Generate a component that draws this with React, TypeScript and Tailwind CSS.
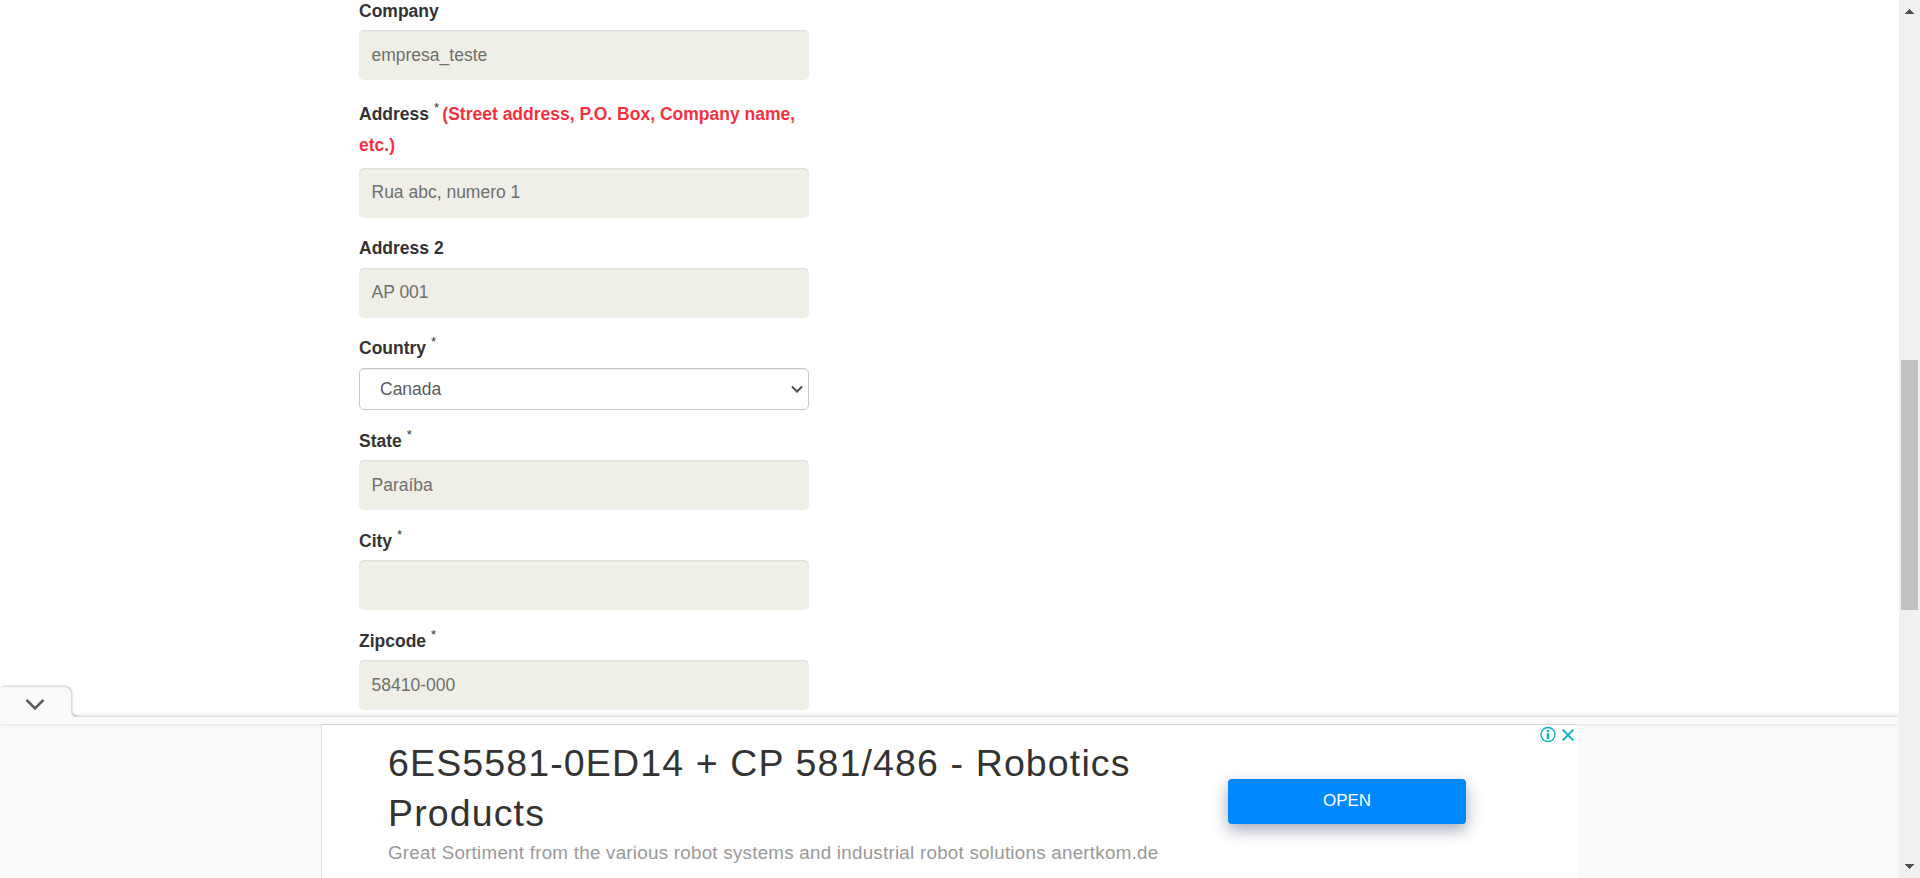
import React from "react";

function Label({ text, required, note, className = "" }: { text: string; required?: boolean; note?: string; className?: string }) {
  return (
    <div className={`flex items-end text-[17.5px] leading-[31px] font-bold text-[#333] ${className}`}>
      <label className="block w-full">
        {text}
        {required && (
          <>
            {" "}
            <sup className="-top-[8px] text-[13px] leading-none font-normal">*</sup>
          </>
        )}
        {note && <span className="-ml-[1.5px] text-[#f4323f]"> {note}</span>}
      </label>
    </div>
  );
}

function Field({ value, className = "" }: { value: string; className?: string }) {
  return (
    <input
      readOnly
      value={value}
      className={`block h-[50px] w-full rounded-[5px] bg-[#efeee7] px-[12.5px] text-[17.5px] text-[#70706c] shadow-[inset_0_1.25px_1.25px_rgba(0,0,0,0.075)] outline-none ${className}`}
    />
  );
}

function Scrollbar() {
  return (
    <div className="flex h-full w-[21px] shrink-0 flex-col items-center bg-[#f0f0f0] pt-[9px]">
      <svg width="9" height="5" viewBox="0 0 9 5" fill="#505050" shapeRendering="crispEdges">
        <path d="M4 0h1v1h1v1h1v1h1v1h1v1H0V4h1V3h1V2h1V1h1z" />
      </svg>
      <div className="mt-[346px] h-[250px] w-[17px] bg-[#c1c1c1]" />
      <svg className="mt-[254px]" width="9" height="5" viewBox="0 0 9 5" fill="#505050" shapeRendering="crispEdges">
        <path d="M0 0h9v1H8v1H7v1H6v1H5v1H4V4H3V3H2V2H1V1H0z" />
      </svg>
    </div>
  );
}

function AdBanner() {
  return (
    <footer className="relative h-[161px] bg-[#fafafa] shadow-[0_0_5px_rgba(0,0,0,0.15)]">
      <svg className="absolute -top-[35px] left-0" width="90" height="36" viewBox="0 0 90 36">
        <path d="M0 7Q2 5 6 5H63Q71 5 71 13V29Q71 35 77 35V36H0Z" fill="#fafafa" style={{ filter: "drop-shadow(1px -1px 1px rgba(0,0,0,0.22))" }} />
        <path d="M26.5 17.9 35 26.3 43.5 17.9" fill="none" stroke="#5c5c5c" strokeWidth="2.6" />
        <path d="M0 35H90V36H0Z" fill="#fafafa" />
      </svg>
      <div className="h-[7px] shadow-[0_0_4px_rgba(0,0,0,0.15)]" />
      <div className="ml-[321px] flex h-[154px] w-[1256px] border-t border-l border-t-[#d2d2d2] border-l-[#dedede] bg-white">
        <div className="w-[906px] shrink-0 pt-[13px] pl-[66px]">
          <h2 className="w-[800px] text-[37.5px] leading-[50px] tracking-[1.13px] text-[#333]">
            6ES5581-0ED14 + CP 581/486 - Robotics Products
          </h2>
          <p className="mt-[2px] text-[18.75px] leading-[26px] tracking-[0.26px] whitespace-nowrap text-[#999]">
            Great Sortiment from the various robot systems and industrial robot solutions anertkom.de
          </p>
        </div>
        <button className="mt-[54px] h-[45px] w-[238px] shrink-0 rounded-[4px] bg-[#0088ff] pb-[2px] text-[17px] text-white shadow-[0_6px_16px_rgba(40,50,80,0.42)]">
          OPEN
        </button>
        <div className="mt-[1px] ml-auto flex h-[17px] items-center gap-[6px] pr-[3.5px]">
          <svg width="16" height="17" viewBox="0 0 16 17" fill="none" stroke="#00aecd">
            <circle cx="8" cy="8.5" r="7" strokeWidth="1.3" />
            <path d="M8 4v2M8 7.2v5.8" strokeWidth="2.4" />
          </svg>
          <svg width="12" height="12" viewBox="0 0 12 12" fill="none" stroke="#00aecd" strokeWidth="1.8">
            <path d="M.6.6 11.4 11.4M11.4.6.6 11.4" />
          </svg>
        </div>
      </div>
    </footer>
  );
}

export default function App() {
  return (
    <div className="flex h-[878px] w-full overflow-hidden bg-white font-['Liberation_Sans',Arial,sans-serif]">
      <div className="flex min-w-0 flex-1 flex-col overflow-hidden">
        <main className="h-[717px] shrink-0 pl-[359px]">
          <form className="w-[450px]">
            <Label text="Company" className="h-[30px] pb-[3px]" />
            <Field value="empresa_teste" />
            <Label text="Address" required note="(Street address, P.O. Box, Company name, etc.)" className="h-[88px] pb-[7px]" />
            <Field value="Rua abc, numero 1" className="pb-px" />
            <Label text="Address 2" className="h-[50px] pb-[4px]" />
            <Field value="AP 001" className="pb-px" />
            <Label text="Country" required className="h-[50px] pb-[4px]" />
            <div className="flex h-[42px] items-center justify-between rounded-[5px] border border-[#c8c8c8] pr-[5px] pl-[20px] text-[17.5px] text-[#5c5c5c] shadow-[inset_0_1px_1px_rgba(0,0,0,0.075)]">
              <span>Canada</span>
              <svg width="12" height="8" viewBox="0 0 12 8" fill="none" stroke="#505050" strokeWidth="2.1">
                <path d="M1 1.6 6 6.6 11 1.6" />
              </svg>
            </div>
            <Label text="State" required className="h-[50px] pb-[3px]" />
            <Field value="Paraíba" />
            <Label text="City" required className="h-[50px] pb-[3px]" />
            <Field value="" />
            <Label text="Zipcode" required className="h-[50px] pb-[3px]" />
            <Field value="58410-000" />
          </form>
        </main>
        <AdBanner />
      </div>
      <Scrollbar />
    </div>
  );
}
